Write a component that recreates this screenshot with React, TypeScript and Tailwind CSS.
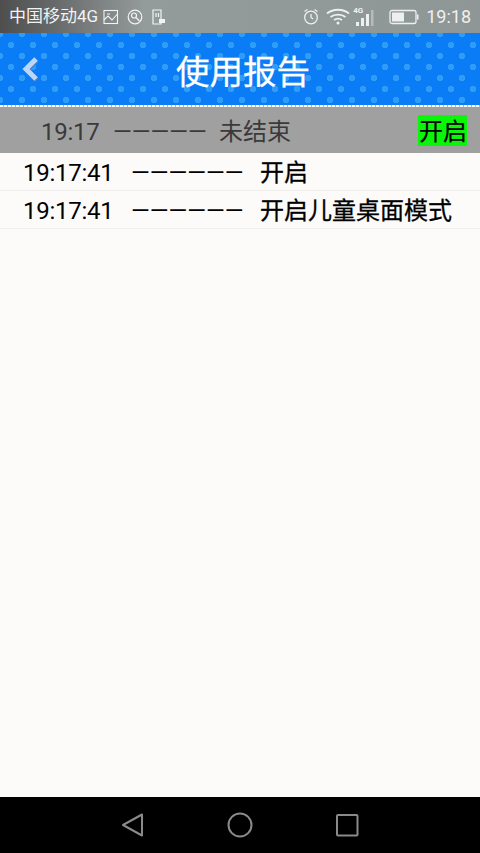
const font = "font-['Roboto','Noto_Sans_CJK_SC',sans-serif]";

function StatusIcons() {
  return (
    <div className="flex items-center text-[#eef0f0]">
      <svg width="16" height="17" viewBox="0 0 16 17" fill="none" stroke="currentColor" strokeWidth="1.3" className="mr-[7px]">
        <circle cx="8" cy="9.500" r="6.300" />
        <path d="M8 6v3.500l2.200 1.500M1.500 3.500l3-2M14.500 3.500l-3-2" />
      </svg>
      <svg width="24" height="17" viewBox="0 0 24 17" fill="none" stroke="currentColor" strokeWidth="1.8" className="mr-[3px]">
        <path d="M1 5.5C7 .5 17 .5 23 5.5M4.500 9c4-3.200 11-3.200 15 0M8 12c2.400-1.600 5.600-1.600 8 0" />
        <circle cx="12" cy="15" r="1.500" fill="currentColor" stroke="none" />
      </svg>
      <div className="relative mr-[14px] h-[20px] w-[22px]">
        <span className="absolute left-0 top-[-1px] text-[8px] font-bold leading-[10px]">4G</span>
        <svg width="22" height="20" viewBox="0 0 22 20" fill="currentColor" className="absolute left-0 top-0">
          <rect x="3" y="15" width="3" height="4" />
          <rect x="8" y="11" width="3" height="8" />
          <rect x="13" y="7" width="3" height="12" />
          <rect x="18" y="3" width="2.500" height="16" opacity="0.4" />
        </svg>
      </div>
      <svg width="30" height="16" viewBox="0 0 30 16" fill="none" className="mr-[7px]">
        <rect x="1" y="1.500" width="26" height="13" rx="2" stroke="currentColor" strokeWidth="1.300" />
        <rect x="3" y="3.500" width="12" height="9" fill="currentColor" />
        <rect x="28" y="5.500" width="1.500" height="5" fill="currentColor" />
      </svg>
      <span className="text-[18px] leading-none">19:18</span>
    </div>
  );
}

function Row({ time, action }: { time: string; action: string }) {
  return (
    <div className="flex h-[38px] items-center border-b border-[#f0efec] pl-[23px] pt-[2px] text-[24px] leading-none text-black">
      <span className="w-[108px] tracking-[-0.25px]">{time}</span>
      <span className="w-[129px]">——————</span>
      <span className="[-webkit-text-stroke:0.3px_black]">{action}</span>
    </div>
  );
}

export default function App() {
  return (
    <div className={`flex h-[853px] w-[480px] flex-col bg-[#fcfbf9] ${font}`}>
      <div className="flex h-[33px] items-center justify-between bg-gradient-to-r from-[#4e4e4e] via-[#949b9b] via-30% to-[#8f9696] pl-[9px] pr-[9px]">
        <div className="flex items-center text-[#f2f3f3]">
          <span className="text-[17px] leading-none">中国移动4G</span>
          <svg width="16" height="16" viewBox="0 0 16 16" fill="none" stroke="currentColor" strokeWidth="1.100" className="ml-[5px]">
            <rect x="1" y="1.500" width="13.500" height="13" />
            <path d="M1 11l4-4 4 4 5.500-6M4 5h3" />
          </svg>
          <svg width="16" height="16" viewBox="0 0 16 16" fill="none" stroke="currentColor" strokeWidth="1.200" className="ml-[8px]">
            <circle cx="8" cy="8" r="6.800" />
            <circle cx="7" cy="6.500" r="2.500" />
            <path d="M9 8.500l3.500 3.500" />
          </svg>
          <svg width="14" height="16" viewBox="0 0 14 16" fill="none" stroke="currentColor" strokeWidth="1.200" className="ml-[9px]">
            <path d="M1 1h8v14H1z" />
            <path d="M4 4v4M6.500 4v4" />
            <rect x="7" y="10" width="6" height="4" fill="currentColor" stroke="none" />
          </svg>
        </div>
        <StatusIcons />
      </div>

      <div className="relative flex h-[72px] items-center justify-center bg-[#0a7cf6] bg-[radial-gradient(circle,#2f9cf8_3px,transparent_3.500px),radial-gradient(circle,#2f9cf8_3px,transparent_3.500px)] bg-[length:22px_22px] bg-[position:0px_1px,11px_12px] pl-[6px] pt-[8px]">
        <svg width="20" height="26" viewBox="0 0 20 26" fill="none" className="absolute left-[20px] top-[23px]">
          <path d="M16 3L6 13l10 10" stroke="#4f7fc0" strokeWidth="5" transform="translate(1 1)" />
          <path d="M16 3L6 13l10 10" stroke="#bcd6f9" strokeWidth="5" />
        </svg>
        <span className="text-[33.5px] leading-none text-white [-webkit-text-stroke:0.3px_white]">使用报告</span>
      </div>
      <div className="h-[2px] bg-[repeating-linear-gradient(90deg,#ffffff_0px,#ffffff_3px,#8fc4fb_3px,#8fc4fb_4px)]" />

      <div className="flex h-[46px] items-center bg-[#a0a0a0] text-[24px] leading-none text-[#3a3a3a]">
        <div className="flex items-center pl-[41px] pt-[4px]">
          <span className="w-[72px] tracking-[-0.25px]">19:17</span>
          <span className="w-[106px]">—————</span>
          <span>未结束</span>
        </div>
        <span className="ml-auto mr-[13px] flex h-[31px] items-center bg-[#0bf50b] pl-[1px] pt-[4px] text-black [-webkit-text-stroke:0.2px_black]">开启</span>
      </div>

      <Row time="19:17:41" action="开启" />
      <Row time="19:17:41" action="开启儿童桌面模式" />

      <div className="flex-1" />

      <div className="flex h-[56px] items-center justify-between bg-black pl-[121px] pr-[121px]">
        <svg width="24" height="26" viewBox="0 0 24 26" fill="none" stroke="#8a8a8a" strokeWidth="2" strokeLinejoin="round">
          <path d="M21 2.500v21L2 13z" />
        </svg>
        <svg width="26" height="26" viewBox="0 0 26 26" fill="none" stroke="#8a8a8a" strokeWidth="2">
          <circle cx="13" cy="13" r="11.500" />
        </svg>
        <svg width="24" height="24" viewBox="0 0 24 24" fill="none" stroke="#8a8a8a" strokeWidth="2" strokeLinejoin="round">
          <rect x="2" y="2" width="20.500" height="20.500" rx="1" />
        </svg>
      </div>
    </div>
  );
}
